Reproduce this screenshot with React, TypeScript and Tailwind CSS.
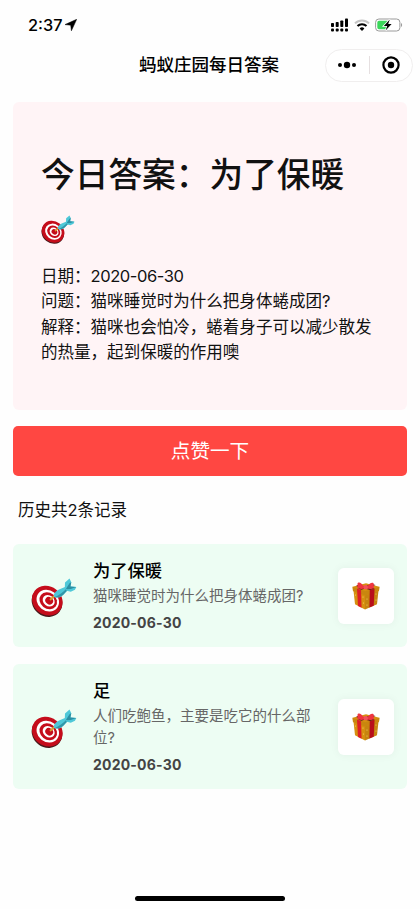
import { useState } from 'react';

type Answer = {
  id: number;
  answer: string;
  question: string;
  date: string;
};

const today = {
  answer: '为了保暖',
  date: '2020-06-30',
  question: '猫咪睡觉时为什么把身体蜷成团?',
  explain: '猫咪也会怕冷，蜷着身子可以减少散发的热量，起到保暖的作用噢',
};

const history: Answer[] = [
  { id: 1, answer: '为了保暖', question: '猫咪睡觉时为什么把身体蜷成团?', date: '2020-06-30' },
  { id: 2, answer: '足', question: '人们吃鲍鱼，主要是吃它的什么部位?', date: '2020-06-30' },
];

function TargetIcon({ className }: { className: string }) {
  return (
    <svg viewBox="0 0 46 40" className={className}>
      <g transform="rotate(38 16 24)">
        <ellipse cx="16.6" cy="24.8" rx="16" ry="14.2" fill="#4a1a1c" />
        <ellipse cx="16" cy="23.500" rx="16" ry="14.2" fill="#c50d1b" />
        <ellipse cx="16.4" cy="23.2" rx="11.8" ry="10.3" fill="#fff" />
        <ellipse cx="16.8" cy="23" rx="9.3" ry="7.9" fill="#c50d1b" />
        <ellipse cx="17.2" cy="22.8" rx="6.4" ry="5.3" fill="#fff" />
        <ellipse cx="17.6" cy="22.5" rx="4.1" ry="3.5" fill="#c50d1b" />
      </g>
      <path d="M19.5 22.500 25 17.500" stroke="#d9a02b" strokeWidth="1.8" strokeLinecap="round" />
      <path d="M23 19.800c-.8-3 1.7-5.600 5-7.300l6.500-2.700 2.300 3.200-4.600 5c-2.600 2.500-6.200 3.600-9.200 1.800Z" fill="#4fc8d8" />
      <path d="M24 19.900c3 .8 6-.2 8.200-2.100l4.500-4.700-1.200-1.600c-3 3.500-7 6.600-11.500 8.400Z" fill="#3296a8" />
      <path d="M33.800 10.300 34 5.600 38.500 1.600l1.800 3.600-.9 4.400 5.900.500-1.300 2.700-4.200 2-4.200-1Z" fill="#4fc8d8" />
      <path d="m35 11.700 3.500-5.500 1.800-1-.9 4.400 5.900.5-5.500 1.800-3.800.3Z" fill="#2b8fa3" />
    </svg>
  );
}

function GiftIcon() {
  return (
    <svg viewBox="0 0 28 28" className="h-7 w-7">
      <path d="M1.500 8.500 13 12.500v15L3 22.300Z" fill="#d6900f" />
      <path d="M26.500 8.500 13 12.500v15l12-5.200Z" fill="#c68410" />
      <path d="M.6 4.800 14 1.300l13.400 3.500-.4 4L13 13.600 1 9Z" fill="#d6900f" />
      <path d="m.6 4.800 12.600 4.500 14.200-4.500L27 8.900 13 13.600 1 9Z" fill="#c9860f" />
      <path d="m5 6.500 4 1.400.600 17.800L6 23.900Z" fill="#dd1f26" />
      <path d="m17.800 8 4.800-1.600-.9 17.300-4.300 1.900Z" fill="#b80f1b" />
      <path d="m6 6.400 14-4.400 3.500 1L9.500 7.800ZM6 2.900 22.500 6.500 18 8 4 4Z" fill="#5c141d" />
      <path d="M12.500 5.200C10 1.200 7.500-.2 6 .8c-1.100 1 .1 2-.7 4.800C7.500 7.500 10 7.100 12.700 6.500Z" fill="#ef3540" />
      <path d="M15 5.200c2-3.800 5-5.200 6.300-4.100 1 .9 0 2.300.700 4.600-2.200 1.700-4.600 1.500-7.200.8Z" fill="#ef3540" />
      <rect x="11.600" y="3" width="4.300" height="4.300" rx="1.600" fill="#f0525a" />
      <g fill="#f6d36a">
        <circle cx="3.500" cy="13" r=".6" />
        <circle cx="11" cy="15" r=".6" />
        <circle cx="11.500" cy="21" r=".6" />
        <circle cx="15" cy="17" r=".6" />
        <circle cx="24" cy="12" r=".6" />
        <circle cx="24" cy="18" r=".6" />
        <circle cx="15" cy="23" r=".6" />
      </g>
    </svg>
  );
}

function StatusBar() {
  return (
    <div className="flex h-12 items-center justify-between pt-0.5 pr-[17px] pl-7">
      <div className="flex items-center gap-[3px]">
        <span className="text-[16.300px] leading-5 font-medium text-black">2:37</span>
        <svg viewBox="0 0 12 12" className="h-3 w-3">
          <path d="M11.700.3 0 5.600l5.700.600.700 5.600Z" fill="#000" stroke="#000" strokeWidth=".5" />
        </svg>
      </div>
      <div className="flex items-center">
        <svg viewBox="0 0 17 14" className="mr-1.5 h-3.5 w-[17px]">
          <g fill="#000">
            <rect x="0" y="5" width="3" height="4" rx=".8" />
            <rect x="4.700" y="4" width="3" height="5" rx=".8" />
            <rect x="9.300" y="2.500" width="3" height="6.500" rx=".8" />
            <rect x="14" y=".5" width="3" height="8.500" rx=".8" />
            <rect x="0" y="10.500" width="3" height="3" rx="1" />
            <rect x="4.700" y="10.500" width="3" height="3" rx="1" />
            <rect x="9.300" y="10.500" width="3" height="3" rx="1" />
            <rect x="14" y="10.500" width="3" height="3" rx="1" />
          </g>
        </svg>
        <svg viewBox="0 0 16 12" className="mr-[5px] h-3 w-4" fill="none">
          <path d="M1 4.400a10 10 0 0 1 14 0" stroke="#c4c4c4" strokeWidth="2" />
          <path d="M3.500 7.100a6.400 6.400 0 0 1 9 0" stroke="#000" strokeWidth="2.100" />
          <path d="M8 11.900 5.600 9.400a3.500 3.500 0 0 1 4.800 0Z" fill="#000" />
        </svg>
        <svg viewBox="0 0 28 14" className="h-3.5 w-7">
          <rect x=".6" y="1" width="24.300" height="12" rx="3.300" fill="#fff" stroke="#9a9a9a" />
          <path d="M4 2.700h8.500v8.600H4A1.700 1.700 0 0 1 2.300 9.600V4.400A1.700 1.700 0 0 1 4 2.700Z" fill="#3bd75b" />
          <path d="M26 5c1.500.500 1.500 3.500 0 4Z" fill="#9a9a9a" />
          <path d="m14.800 1.500-6 6.500h3.400l-1.600 4.500 6-6.500h-3.400Z" fill="#000" stroke="#fff" strokeWidth="1.600" paintOrder="stroke" />
        </svg>
      </div>
    </div>
  );
}

function NavBar() {
  return (
    <div className="grid h-[34px] grid-cols-[1fr_auto_1fr] items-center pr-[7px]">
      <span />
      <h1 className="pl-[5px] text-[17.500px] leading-6 font-medium text-black">蚂蚁庄园每日答案</h1>
      <div className="flex h-[33px] w-[88px] items-center justify-self-end rounded-full border border-[#f0eeee] bg-white">
        <button className="flex flex-1 justify-center" aria-label="更多">
          <svg viewBox="0 0 20 8" className="h-2 w-5">
            <circle cx="3" cy="4" r="2" />
            <circle cx="10" cy="4" r="3.200" />
            <circle cx="17" cy="4" r="2" />
          </svg>
        </button>
        <span className="h-[18px] w-px bg-[#e6e0e1]" />
        <button className="flex flex-1 justify-center" aria-label="关闭">
          <svg viewBox="0 0 18 18" className="h-[18px] w-[18px]">
            <circle cx="9" cy="9" r="7.600" fill="none" stroke="#000" strokeWidth="2.200" />
            <circle cx="9" cy="9" r="3.200" />
          </svg>
        </button>
      </div>
    </div>
  );
}

function HistoryCard({ item }: { item: Answer }) {
  return (
    <li className="flex items-center rounded-md bg-[#edfdf3] pt-[14px] pb-[13px] pr-[13px] pl-[18px]">
      <TargetIcon className="mt-0.5 h-10 w-[46px] shrink-0" />
      <div className="ml-[16px] min-w-0 flex-1 pr-[22px]">
        <h3 className="text-[17.300px] leading-[26px] font-medium text-black">{item.answer}</h3>
        <p className="mt-px text-[14.500px] leading-[22.500px] text-[#666]">{item.question}</p>
        <p className="mt-1 text-[14px] leading-[22px] font-bold tracking-[0.2px] text-[#444]">{item.date}</p>
      </div>
      <div className="flex h-14 w-14 shrink-0 items-center justify-center rounded-md bg-white shadow-[0_0_10px_rgba(0,0,0,0.05)]">
        <GiftIcon />
      </div>
    </li>
  );
}

export default function App() {
  const [liked, setLiked] = useState(false);

  return (
    <div
      lang="zh-CN"
      className="flex h-[909px] w-[420px] flex-col overflow-hidden bg-[#fefefe] font-['Inter','Noto_Sans_CJK_SC',sans-serif]"
    >
      <StatusBar />
      <NavBar />

      <main className="flex-1 px-[13px] pt-5">
        <section className="h-[308px] rounded-md bg-[#fff4f6] px-7 pt-12 text-[#111]">
          <h2 className="text-[33.700px] leading-[50px] font-medium whitespace-nowrap">{`今日答案：${today.answer}`}</h2>
          <TargetIcon className="mt-[14px] h-[30px] w-[34px]" />
          <div className="mt-5 text-[16.550px] leading-[25.300px]">
            <p>
              日期：<span className="tracking-[-0.45px]">{today.date}</span>
            </p>
            <p>{`问题：${today.question}`}</p>
            <p>{`解释：${today.explain}`}</p>
          </div>
        </section>

        <button
          onClick={() => setLiked(true)}
          disabled={liked}
          className="mt-4 h-[50px] w-full rounded-[5px] bg-[#ff4742] pt-0.5 text-[19.600px] text-white"
        >
          点赞一下
        </button>

        <p className="mt-[21px] pl-[5px] text-[16.500px] leading-[26px] text-[#111]">历史共{history.length}条记录</p>

        <ul className="mt-[21px] space-y-[17px]">
          {history.map((item) => (
            <HistoryCard key={item.id} item={item} />
          ))}
        </ul>
      </main>

      <div className="mx-auto mb-2 h-[5px] w-[150px] rounded-full bg-black" />
    </div>
  );
}
